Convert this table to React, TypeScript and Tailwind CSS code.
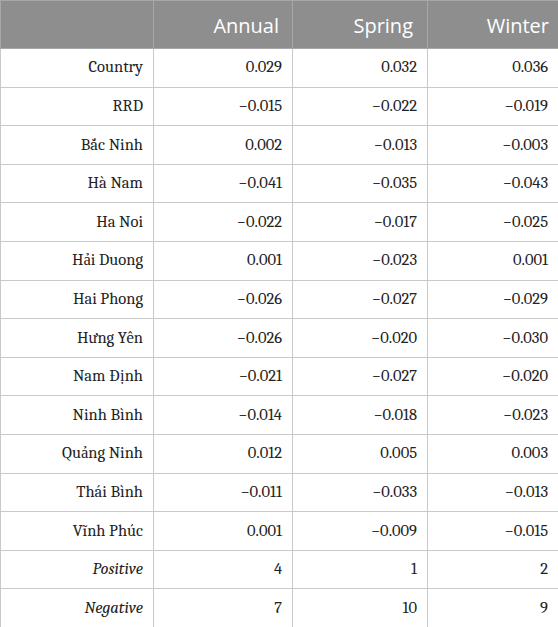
import React from 'react';

interface Row {
  name: string;
  italic?: boolean;
  values: [string, string, string];
}

const rows: Row[] = [
  { name: 'Country', values: ['0.029', '0.032', '0.036'] },
  { name: 'RRD', values: ['−0.015', '−0.022', '−0.019'] },
  { name: 'Bắc Ninh', values: ['0.002', '−0.013', '−0.003'] },
  { name: 'Hà Nam', values: ['−0.041', '−0.035', '−0.043'] },
  { name: 'Ha Noi', values: ['−0.022', '−0.017', '−0.025'] },
  { name: 'Hải Duong', values: ['0.001', '−0.023', '0.001'] },
  { name: 'Hai Phong', values: ['−0.026', '−0.027', '−0.029'] },
  { name: 'Hưng Yên', values: ['−0.026', '−0.020', '−0.030'] },
  { name: 'Nam Định', values: ['−0.021', '−0.027', '−0.020'] },
  { name: 'Ninh Bình', values: ['−0.014', '−0.018', '−0.023'] },
  { name: 'Quảng Ninh', values: ['0.012', '0.005', '0.003'] },
  { name: 'Thái Bình', values: ['−0.011', '−0.033', '−0.013'] },
  { name: 'Vĩnh Phúc', values: ['0.001', '−0.009', '−0.015'] },
  { name: 'Positive', italic: true, values: ['4', '1', '2'] },
  { name: 'Negative', italic: true, values: ['7', '10', '9'] },
];

const App: React.FC = () => {
  return (
    <div className="w-[558px] h-[627px] bg-white font-serif text-[16.5px] text-[#222]">
      <table className="w-[558px] border-collapse table-fixed">
        <colgroup>
          <col className="w-[153px]" />
          <col className="w-[139px]" />
          <col className="w-[135px]" />
          <col className="w-[131px]" />
        </colgroup>
        <thead>
          <tr className="h-[48px] bg-[#8e8e8e] text-white text-[20px] font-['Open_Sans']">
            <th className="border border-[#a8a8a8]" />
            <th className="border border-[#a8a8a8] pr-[13px] pt-[2px] text-right font-normal">Annual</th>
            <th className="border border-[#a8a8a8] pr-[14px] pt-[2px] text-right font-normal">Spring</th>
            <th className="border border-[#a8a8a8] pr-[9px] pt-[2px] text-right font-normal">Winter</th>
          </tr>
        </thead>
        <tbody>
          {rows.map(row => (
            <tr key={row.name} className="h-[38.6px]">
              <td
                className={`border border-[#c9c9c9] pr-[10px] text-right ${row.italic ? 'italic' : ''}`}
              >
                {row.name}
              </td>
              {row.values.map((v, i) => (
                <td key={i} className="border border-[#c9c9c9] pr-[10px] text-right">
                  {v}
                </td>
              ))}
            </tr>
          ))}
        </tbody>
      </table>
    </div>
  );
};

export default App;
